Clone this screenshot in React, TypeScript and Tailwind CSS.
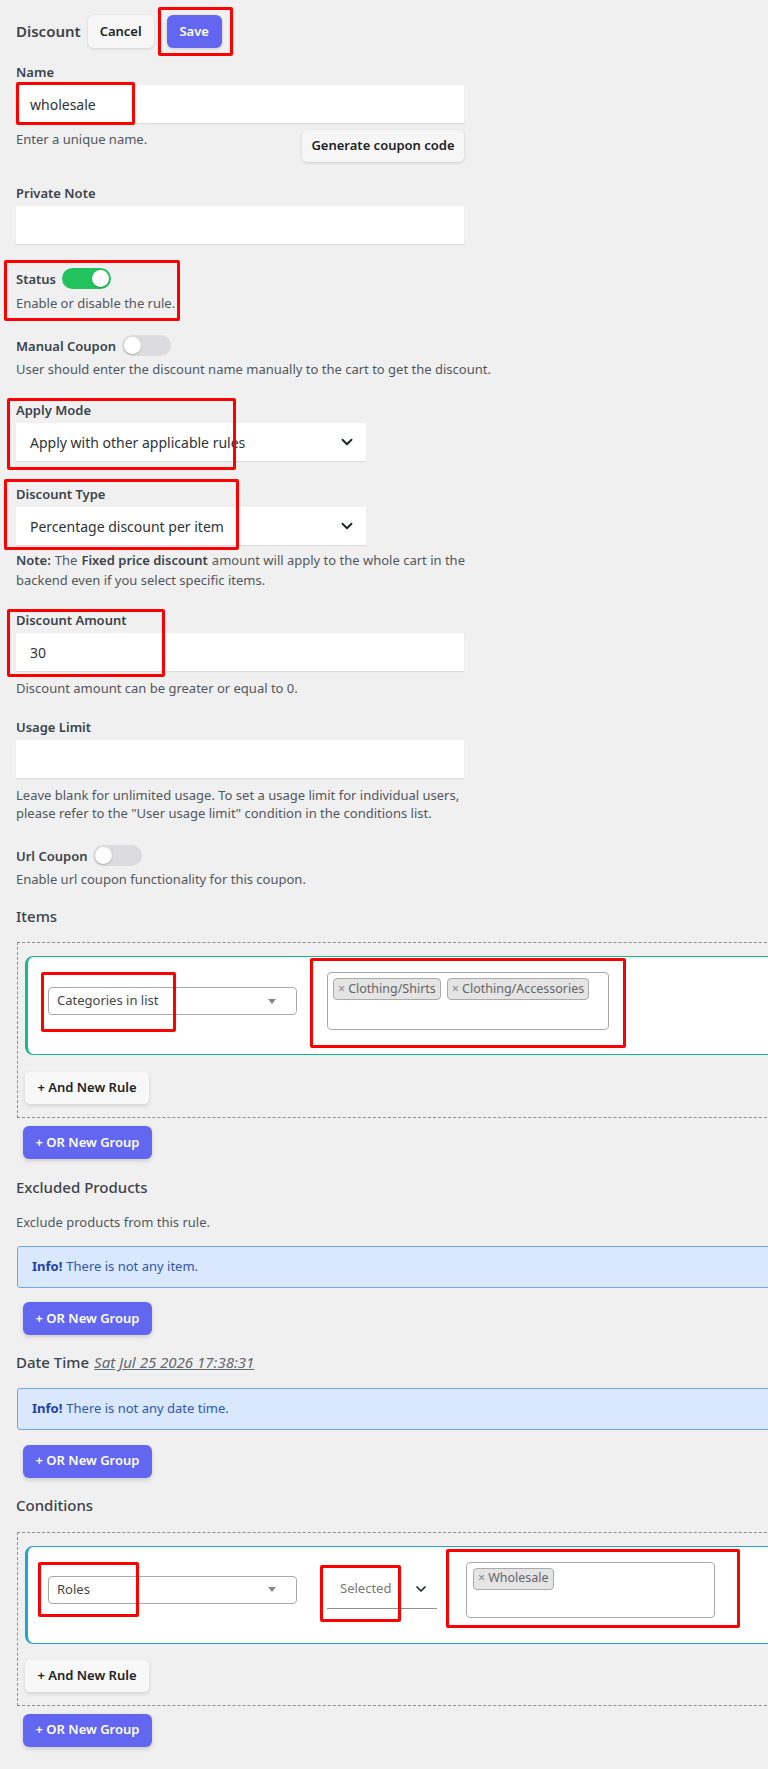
import React from "react";
import { ChevronDown } from "lucide-react";

const font = { fontFamily: '"Noto Sans", "Open Sans", sans-serif' };

const RedBox = ({ className }: { className: string }) => (
  <span className={`pointer-events-none absolute border-[3px] border-[#f00] rounded-[2px] ${className}`} />
);

const Label = ({ children }: { children: React.ReactNode }) => (
  <div className="text-[13px] leading-[18px] font-semibold text-[#3c434a]">{children}</div>
);

const Help = ({ children, className = "" }: { children: React.ReactNode; className?: string }) => (
  <div className={`text-[13px] leading-[18px] text-[#50575e] ${className}`}>{children}</div>
);

const TextInput = ({ value = "" }: { value?: string }) => (
  <div className="h-[38px] w-[448px] bg-white shadow-[0_1px_1px_rgba(0,0,0,0.08)] flex items-center px-[14px] text-[14px] text-[#2c3338]">
    {value}
  </div>
);

const Select = ({ value }: { value: string }) => (
  <div className="h-[38px] w-[350px] bg-white shadow-[0_1px_1px_rgba(0,0,0,0.08)] flex items-center justify-between pl-[14px] pr-[10px] text-[14px] text-[#2c3338]">
    <span>{value}</span>
    <ChevronDown size={18} strokeWidth={2.5} className="text-[#1d2327]" />
  </div>
);

const Toggle = ({ on }: { on?: boolean }) => (
  <div
    className={`h-[21px] w-[49px] rounded-full flex items-center px-[2px] ${
      on ? "bg-[#22c35e] justify-end" : "bg-[#dcdcde] justify-start"
    }`}
  >
    <span className="h-[17px] w-[17px] rounded-full bg-white shadow-[0_1px_2px_rgba(0,0,0,0.2)]" />
  </div>
);

const OrGroup = ({ className = "" }: { className?: string }) => (
  <button className={`ml-[7px] h-[33px] w-[129px] rounded-[6px] bg-[#6366f1] text-white text-[13px] font-semibold shadow-[0_2px_4px_rgba(0,0,0,0.15)] ${className}`}>
    + OR New Group
  </button>
);

const AndRule = ({ className = "" }: { className?: string }) => (
  <button className={`h-[32px] w-[124px] rounded-[5px] bg-[#f8f8f8] text-[#1d2327] text-[13px] font-semibold shadow-[0_2px_4px_rgba(0,0,0,0.12)] ${className}`}>
    + And New Rule
  </button>
);

const Select2 = ({ value }: { value: string }) => (
  <div className="h-[28px] w-[249px] rounded-[4px] border border-[#aaa] bg-white flex items-center justify-between pl-[8px] pr-[20px] text-[13px] text-[#444]">
    <span>{value}</span>
    <span className="w-0 h-0 border-x-[4px] border-x-transparent border-t-[5px] border-t-[#888]" />
  </div>
);

const Tag = ({ text }: { text: string }) => (
  <span className="h-[22px] rounded-[4px] border border-[#aaa] bg-[#e4e4e4] px-[4px] flex items-center text-[12.5px] text-[#666]">
    <span className="mr-[3px] text-[#888]">×</span>
    {text}
  </span>
);

const Heading = ({ children }: { children: React.ReactNode }) => (
  <div className="text-[15px] leading-[22px] font-medium text-[#3c434a]">{children}</div>
);

const Info = ({ text }: { text: string }) => (
  <div className="h-[42px] w-[770px] rounded-[3px] border border-[#72a5e6] bg-[#d9e8fc] flex items-center pl-[14px] text-[13px] text-[#2f56b0]">
    <b className="font-bold text-[#1e3fa8] mr-[4px]">Info!</b>
    <span>{text}</span>
  </div>
);

export default function App() {
  return (
    <div className="min-h-[1769px] w-full overflow-hidden bg-[#f0f0f1]" style={font}>
      <div className="pl-4 pt-[15px] pb-[22px] flex flex-col">
        {/* header */}
        <div className="flex items-center h-[33px]">
          <span className="text-[15px] font-semibold text-[#3c434a] mr-[7px]">Discount</span>
          <button className="h-[33px] w-[66px] rounded-[6px] bg-[#f6f6f6] text-[13px] font-semibold text-[#1d2327] shadow-[0_1px_3px_rgba(0,0,0,0.12)]">
            Cancel
          </button>
          <div className="relative ml-[13px]">
            <button className="h-[33px] w-[55px] rounded-[6px] bg-[#6366f1] text-[13px] font-semibold text-white shadow-[0_1px_3px_rgba(0,0,0,0.15)]">
              Save
            </button>
            <RedBox className="-top-[8px] -bottom-[8px] -left-[9px] -right-[11px]" />
          </div>
        </div>

        {/* name */}
        <div className="mt-[15px]">
          <Label>Name</Label>
        </div>
        <div className="relative mt-[4px]">
          <TextInput value="wholesale" />
          <RedBox className="left-0 -top-[3px] w-[119px] h-[43px]" />
        </div>
        <div className="mt-[7px] w-[448px] flex items-start justify-between">
          <Help>Enter a unique name.</Help>
          <button className="h-[32px] w-[162px] rounded-[5px] bg-[#f6f6f6] text-[13px] font-semibold text-[#1d2327] shadow-[0_1px_3px_rgba(0,0,0,0.15)]">
            Generate coupon code
          </button>
        </div>

        <div className="mt-[22px]">
          <Label>Private Note</Label>
        </div>
        <div className="mt-[4px]">
          <TextInput />
        </div>

        {/* status */}
        <div className="relative mt-[24px]">
          <div className="flex items-center gap-[6px]">
            <Label>Status</Label>
            <Toggle on />
          </div>
          <Help className="mt-[5px]">Enable or disable the rule.</Help>
          <RedBox className="-left-[12px] -top-[8px] w-[176px] h-[61px]" />
        </div>

        <div className="mt-[23px] flex items-center gap-[6px]">
          <Label>Manual Coupon</Label>
          <Toggle />
        </div>
        <Help className="mt-[4px]">User should enter the discount name manually to the cart to get the discount.</Help>

        {/* apply mode */}
        <div className="relative mt-[23px]">
          <Label>Apply Mode</Label>
          <div className="mt-[4px]">
            <Select value="Apply with other applicable rules" />
          </div>
          <RedBox className="-left-[9px] -top-[3px] w-[229px] h-[72px]" />
        </div>

        <div className="relative mt-[24px]">
          <Label>Discount Type</Label>
          <div className="mt-[4px]">
            <Select value="Percentage discount per item" />
          </div>
          <RedBox className="-left-[12px] -top-[6px] w-[235px] h-[71px]" />
        </div>
        <div className="mt-[5px] text-[13px] leading-[20px] text-[#50575e]">
          <div className="flex gap-[4px]">
            <b className="font-semibold text-[#3c434a]">Note:</b>
            <span>The</span>
            <b className="font-semibold text-[#3c434a]">Fixed price discount</b>
            <span>amount will apply to the whole cart in the</span>
          </div>
          <div>backend even if you select specific items.</div>
        </div>

        <div className="relative mt-[21px]">
          <Label>Discount Amount</Label>
          <div className="mt-[4px]">
            <TextInput value="30" />
          </div>
          <RedBox className="-left-[9px] -top-[2px] w-[158px] h-[68px]" />
        </div>
        <Help className="mt-[8px]">Discount amount can be greater or equal to 0.</Help>

        <div className="mt-[21px]">
          <Label>Usage Limit</Label>
        </div>
        <div className="mt-[4px]">
          <TextInput />
        </div>
        <Help className="mt-[8px]">
          <div>Leave blank for unlimited usage. To set a usage limit for individual users,</div>
          <div>please refer to the "User usage limit" condition in the conditions list.</div>
        </Help>

        <div className="mt-[23px] flex items-center gap-[6px]">
          <Label>Url Coupon</Label>
          <Toggle />
        </div>
        <Help className="mt-[4px]">Enable url coupon functionality for this coupon.</Help>

        {/* items */}
        <div className="mt-[17px]">
          <Heading>Items</Heading>
        </div>
        <div className="mt-[15px] ml-px w-[790px] border border-dashed border-[#8c8f94] pt-[13px] pl-[7px] pb-[13px]">
          <div className="rounded-l-[8px] border border-l-[3px] border-[#17b98f] bg-white pl-[20px] pt-[15px] pb-[24px] flex items-center">
            <div className="relative">
              <Select2 value="Categories in list" />
              <RedBox className="-left-[7px] -top-[15px] w-[135px] h-[60px]" />
            </div>
            <div className="relative ml-[30px]">
              <div className="h-[58px] w-[282px] rounded-[4px] border border-[#aaa] bg-white flex items-start gap-[6px] pl-[5px] pt-[5px]">
                <Tag text="Clothing/Shirts" />
                <Tag text="Clothing/Accessories" />
              </div>
              <RedBox className="-left-[17px] -top-[14px] w-[316px] h-[90px]" />
            </div>
          </div>
          <AndRule className="mt-[17px]" />
        </div>
        <OrGroup className="mt-[8px]" />

        {/* excluded */}
        <div className="mt-[17px]">
          <Heading>Excluded Products</Heading>
        </div>
        <Help className="mt-[15px]">Exclude products from this rule.</Help>
        <div className="mt-[15px] ml-px">
          <Info text="There is not any item." />
        </div>
        <OrGroup className="mt-[14px]" />

        <div className="mt-[16px] flex items-baseline gap-[5px]">
          <Heading>Date Time</Heading>
          <span className="text-[15px] italic underline text-[#646970]">Sat Jul 25 2026 17:38:31</span>
        </div>
        <div className="mt-[14px] ml-px">
          <Info text="There is not any date time." />
        </div>
        <OrGroup className="mt-[15px]" />

        {/* conditions */}
        <div className="mt-[16px]">
          <Heading>Conditions</Heading>
        </div>
        <div className="mt-[16px] ml-px w-[790px] border border-dashed border-[#8c8f94] pt-[13px] pl-[7px] pb-[13px]">
          <div className="rounded-l-[8px] border border-l-[3px] border-[#20a3d6] bg-white pl-[20px] pt-[15px] pb-[25px] flex items-center">
            <div className="relative">
              <Select2 value="Roles" />
              <RedBox className="-left-[10px] -top-[14px] w-[101px] h-[55px]" />
            </div>
            <div className="relative ml-[30px] h-[38px] w-[110px] border-b border-[#8c8f94] flex items-center justify-between pl-[13px] pr-[8px] text-[13px] text-[#777]">
              <span>Selected</span>
              <ChevronDown size={16} strokeWidth={2.5} className="text-[#1d2327]" />
              <RedBox className="-left-[7px] -top-[6px] w-[81px] h-[57px]" />
            </div>
            <div className="relative ml-[29px]">
              <div className="h-[56px] w-[249px] rounded-[4px] border border-[#aaa] bg-white flex items-start pl-[6px] pt-[5px]">
                <Tag text="Wholesale" />
              </div>
              <RedBox className="-left-[20px] -top-[13px] w-[294px] h-[79px]" />
            </div>
          </div>
          <AndRule className="mt-[16px]" />
        </div>
        <OrGroup className="mt-[8px]" />
      </div>
    </div>
  );
}
